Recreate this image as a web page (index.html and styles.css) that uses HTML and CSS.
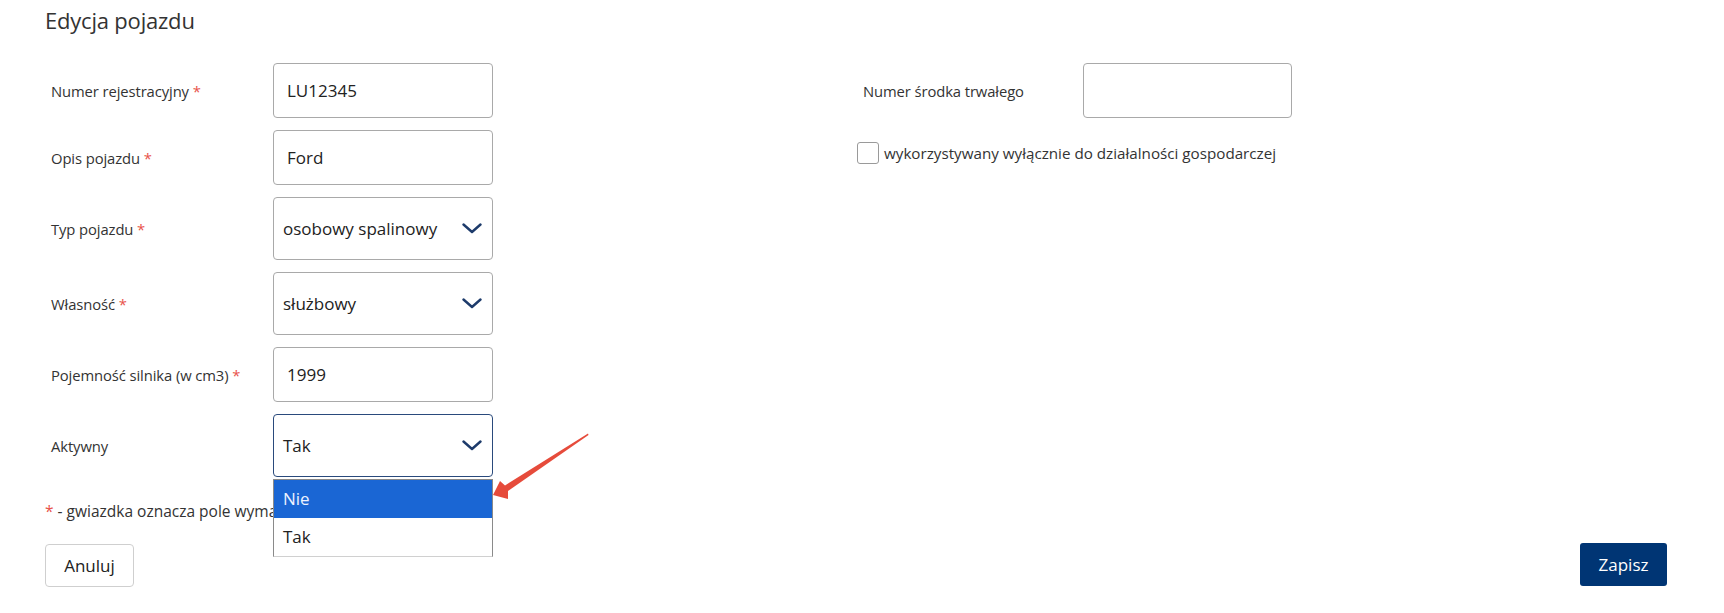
FILE: index.html
```html
<!DOCTYPE html>
<html lang="pl">
<head>
<meta charset="utf-8">
<title>Edycja pojazdu</title>
<link rel="stylesheet" href="styles.css">
</head>
<body>
<main class="page">
  <h1 class="title">Edycja pojazdu</h1>
  <div class="form-grid">
    <div class="col col-left">
      <div class="row">
        <label class="label">Numer rejestracyjny <span class="req">*</span></label>
        <div class="field input">LU12345</div>
      </div>
      <div class="row">
        <label class="label">Opis pojazdu <span class="req">*</span></label>
        <div class="field input">Ford</div>
      </div>
      <div class="row">
        <label class="label">Typ pojazdu <span class="req">*</span></label>
        <div class="field select"><span>osobowy spalinowy</span>
          <svg class="chev" width="20" height="11" viewBox="0 0 20 11"><path d="M1.5 1.5 L10 9 L18.5 1.5" fill="none" stroke="#1d3b6b" stroke-width="2.4" stroke-linecap="round" stroke-linejoin="round"/></svg>
        </div>
      </div>
      <div class="row">
        <label class="label">Własność <span class="req">*</span></label>
        <div class="field select"><span>służbowy</span>
          <svg class="chev" width="20" height="11" viewBox="0 0 20 11"><path d="M1.5 1.5 L10 9 L18.5 1.5" fill="none" stroke="#1d3b6b" stroke-width="2.4" stroke-linecap="round" stroke-linejoin="round"/></svg>
        </div>
      </div>
      <div class="row">
        <label class="label">Pojemność silnika (w cm3) <span class="req">*</span></label>
        <div class="field input">1999</div>
      </div>
      <div class="row">
        <label class="label">Aktywny</label>
        <div class="field select focused"><span>Tak</span>
          <svg class="chev" width="20" height="11" viewBox="0 0 20 11"><path d="M1.5 1.5 L10 9 L18.5 1.5" fill="none" stroke="#1d3b6b" stroke-width="2.4" stroke-linecap="round" stroke-linejoin="round"/></svg>
          <ul class="dropdown">
            <li class="opt active">Nie</li>
            <li class="opt">Tak</li>
          </ul>
        </div>
      </div>
      <p class="note"><span class="req">*</span> - gwiazdka oznacza pole wymagane</p>
    </div>
    <div class="col col-right">
      <div class="row row-right">
        <label class="label">Numer środka trwałego</label>
        <div class="field input input-right"></div>
      </div>
      <div class="check-row">
        <span class="checkbox"></span>
        <span class="check-label">wykorzystywany wyłącznie do działalności gospodarczej</span>
      </div>
    </div>
  </div>
  <div class="actions">
    <button class="btn btn-cancel">Anuluj</button>
    <button class="btn btn-save">Zapisz</button>
  </div>
  <svg class="arrow" width="1724" height="613" viewBox="0 0 1724 613">
    <polygon points="493,495 500,481 505,485.5 588,433.5 588.5,435 508,491 508,499" fill="#e64b3b"/>
  </svg>
</main>
</body>
</html>
```

FILE: styles.css
```css
* { box-sizing: border-box; }
html, body { margin: 0; padding: 0; background: #fff; }
body {
  font-family: "Open Sans", "Noto Sans", sans-serif;
  color: #333;
}
.page {
  position: relative;
  width: 1724px;
  height: 613px;
  padding: 0 57px 0 45px;
  overflow: hidden;
}
.title {
  margin: 0;
  padding-top: 5px;
  height: 63px;
  font-size: 22px;
  font-weight: 400;
  line-height: 30px;
  color: #333;
  letter-spacing: -0.2px;
}
.form-grid {
  display: grid;
  grid-template-columns: 812px 1fr;
}
.col { display: flex; flex-direction: column; gap: 12px; }
.row {
  display: grid;
  grid-template-columns: 228px 220px;
  align-items: center;
}
.row-right { grid-template-columns: 226px 209px; }
.label {
  padding-left: 6px;
  font-size: 14.8px;
  color: #333;
  letter-spacing: -0.1px;
}
.req { color: #e8524a; }
.field {
  position: relative;
  border: 1px solid #a9a9a9;
  border-radius: 4px;
  background: #fff;
  color: #222;
  font-size: 17px;
  display: flex;
  align-items: center;
}
.input { height: 55px; padding-left: 13px; }
.select {
  height: 63px;
  padding: 0 10px 0 9px;
  justify-content: space-between;
}
.select.focused { border-color: #2a4a7c; }
.chev { display: block; }
.dropdown {
  position: absolute;
  top: 64px;
  left: -1px;
  width: 220px;
  margin: 0;
  padding: 0;
  list-style: none;
  border: 1px solid #8a8a8a;
  border-bottom-color: #d0d0d0;
  background: #fff;
  z-index: 2;
}
.opt {
  height: 38px;
  line-height: 38px;
  padding-left: 9px;
  font-size: 17px;
  color: #222;
}
.opt.active { background: #1a66d4; color: #eef3ff; }
.note {
  margin: 12px 0 0;
  width: 228px;
  white-space: nowrap;
  overflow: hidden;
  font-size: 15.5px;
  line-height: 20px;
  color: #333;
}
.check-row {
  display: flex;
  align-items: center;
  margin-top: 12px;
  gap: 5px;
}
.checkbox {
  width: 22px;
  height: 22px;
  border: 1px solid #9a9a9a;
  border-radius: 3px;
  background: #fff;
}
.check-label { font-size: 15.2px; color: #333; }
.actions {
  display: flex;
  justify-content: space-between;
  margin-top: 23px;
}
.btn {
  height: 43px;
  font-family: inherit;
  font-size: 17px;
  border-radius: 4px;
  cursor: pointer;
}
.btn-cancel {
  width: 89px;
  background: #fff;
  border: 1px solid #cfcfcf;
  color: #222;
}
.btn-save {
  width: 87px;
  background: #003574;
  border: none;
  border-radius: 3px;
  color: #fff;
  font-weight: 500;
  margin-top: -1px;
}
.arrow {
  position: absolute;
  left: 0;
  top: 0;
  pointer-events: none;
  z-index: 3;
}
```
